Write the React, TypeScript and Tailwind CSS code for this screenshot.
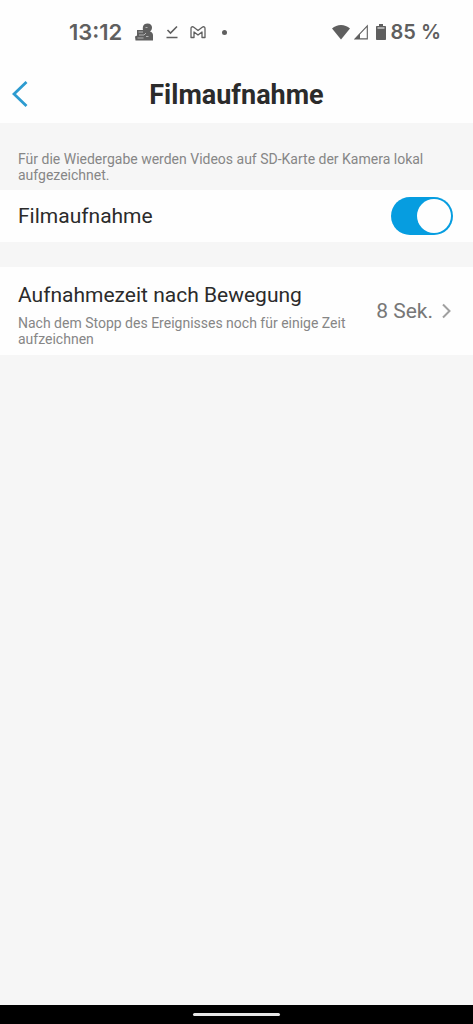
import React, { useState } from "react";

function StatusBar() {
  return (
    <div className="flex h-16 items-center justify-between pr-8 pl-[69px] font-['Inter',sans-serif] text-[22px] font-semibold text-[#5f5f5f]">
      <div className="flex items-center">
        <span>13:12</span>
        <svg className="ml-3 h-5 w-5" viewBox="0 0 20 20" fill="currentColor" aria-hidden="true">
          <path d="M9 8C8.500 6.500 9 5 9 4.500 9.500 2.500 11 1.500 13.500 1.500 16.500 1.500 18 3.500 18 5.500c0 2-.8 3-2 4 2 .5 3 2 3 4V18.500H1.500L1 14.500l2-1V8z" />
          <path d="M4.500 10h4.500M5 13h5l2-2M3.500 16h6" stroke="#b4b4b4" strokeWidth="1" fill="none" />
          <path d="M12 14.500h2.500M11.500 5.500h2" stroke="#b4b4b4" strokeWidth="1" fill="none" />
        </svg>
        <svg className="ml-3 h-4 w-3" viewBox="0 0 12 16" fill="none" stroke="currentColor" strokeWidth="1.600" aria-hidden="true">
          <path d="M1.500 6 4.500 9 11 2.500M0.500 13.500h11" />
        </svg>
        <svg className="ml-3 h-4 w-4" viewBox="0 0 16 16" fill="none" stroke="currentColor" strokeWidth="1.300" strokeLinejoin="round" aria-hidden="true">
          <path d="M1 13.500V4.500C1 2.800 2.500 2.300 3.800 3.300L8 6.500l4.200-3.200C13.500 2.300 15 2.800 15 4.500v9h-3V8L8 11 4 8v5.500z" />
        </svg>
        <span className="ml-4 h-[5px] w-[5px] rounded-full bg-[#5f5f5f]" />
      </div>
      <div className="flex items-center">
        <svg className="h-4 w-[18px]" viewBox="0 0 18 16" fill="currentColor" aria-hidden="true">
          <path d="M0 4.500C5-.3 13-.3 18 4.500L9 15.500z" />
        </svg>
        <svg className="ml-1 h-4 w-[14px]" viewBox="0 0 14 16" aria-hidden="true">
          <path d="M13.300 1.800V14.900H1z" fill="none" stroke="currentColor" strokeWidth="1.100" />
          <path d="M6 9.500V15H.8z" fill="currentColor" />
        </svg>
        <svg className="ml-2 h-4 w-[10px]" viewBox="0 0 10 16" aria-hidden="true">
          <path d="M3 0h4v2h2.200q.8 0 .8.8V15.200q0 .8-.8.8H.8Q0 16 0 15.200V2.800Q0 2 .8 2H3z" fill="currentColor" />
          <path d="M1.500 3.500h7v1h-7z" fill="#fff" />
        </svg>
        <span className="ml-1 text-[20px]">85 %</span>
      </div>
    </div>
  );
}

function App() {
  const [recording, setRecording] = useState(true);

  return (
    <div className="flex min-h-screen flex-col bg-[#f6f6f6] font-['Roboto',sans-serif] text-[#2b2b2b]">
      <header className="bg-[#fefefe]">
        <StatusBar />
        <div className="grid grid-cols-[1fr_auto_1fr] items-center px-3 pt-[15px] pb-3">
          <button type="button" aria-label="Zurück" className="w-4">
            <svg className="h-7 w-4" viewBox="0 0 16 28" fill="none" stroke="#2d9bd0" strokeWidth="2.800">
              <path d="M14.500 1 2 13 14.500 25" />
            </svg>
          </button>
          <h1 className="text-[27px] leading-8 font-bold">Filmaufnahme</h1>
        </div>
      </header>

      <main className="grow">
        <p className="px-[18px] pt-7 pb-[7px] text-[14px] leading-4 text-[#868686]">
          Für die Wiedergabe werden Videos auf SD-Karte der Kamera lokal aufgezeichnet.
        </p>
        <label className="flex h-[52px] items-center justify-between bg-[#fefefe] pr-5 pl-[18px]">
          <span className="text-[21px] leading-6">Filmaufnahme</span>
          <input
            type="checkbox"
            role="switch"
            checked={recording}
            onChange={(e) => setRecording(e.target.checked)}
            className="peer sr-only"
          />
          <span className="flex h-[38px] w-[62px] items-center rounded-full bg-[#b5b5b5] px-[2px] peer-checked:justify-end peer-checked:bg-[#069de0]">
            <span className="h-[34px] w-[34px] rounded-full bg-[#fefefe]" />
          </span>
        </label>

        <button
          type="button"
          className="mt-[25px] flex w-full items-center justify-between bg-[#fefefe] pr-5 pl-[18px] text-left"
        >
          <span className="pt-4 pb-2">
            <span className="block text-[21px] leading-6">Aufnahmezeit nach Bewegung</span>
            <span className="mt-2 block text-[14px] leading-4 text-[#868686]">
              Nach dem Stopp des Ereignisses noch für einige Zeit aufzeichnen
            </span>
          </span>
          <span className="flex shrink-0 items-center text-[21px] leading-6 text-[#777777]">
            8 Sek.
            <svg className="ml-2 h-4 w-3" viewBox="0 0 12 16" fill="none" stroke="#a0a0a0" strokeWidth="2" aria-hidden="true">
              <path d="M2 1.500 8.500 8 2 14.500" />
            </svg>
          </span>
        </button>
      </main>

      <footer className="flex h-[19px] items-center justify-center bg-black">
        <span className="h-[3px] w-[87px] rounded-full bg-[#e8e8e8]" />
      </footer>
    </div>
  );
}

export default App;
